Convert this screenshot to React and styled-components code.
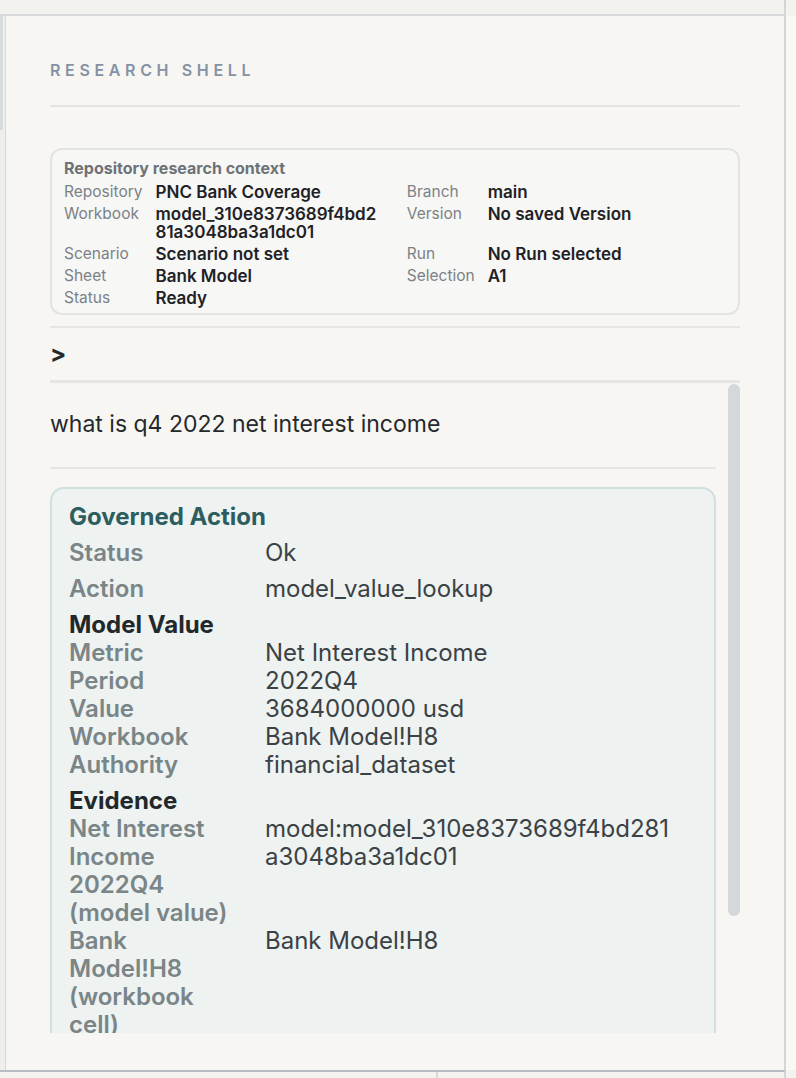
import React from "react";
import styled, { createGlobalStyle } from "styled-components";

const GlobalStyle = createGlobalStyle`
  html, body {
    margin: 0;
    padding: 0;
    background: #f3f2ee;
  }
  body {
    font-family: Inter, "Noto Sans", sans-serif;
    -webkit-font-smoothing: antialiased;
  }
  * { box-sizing: border-box; }
`;

const contextRows = [
  ["Repository", "PNC Bank Coverage"],
  ["Branch", "main"],
  ["Workbook", "model_310e8373689f4bd281a3048ba3a1dc01"],
  ["Version", "No saved Version"],
  ["Scenario", "Scenario not set"],
  ["Run", "No Run selected"],
  ["Sheet", "Bank Model"],
  ["Selection", "A1"],
  ["Status", "Ready"],
];

const sections = [
  {
    title: "Model Value",
    rows: [
      ["Metric", "Net Interest Income"],
      ["Period", "2022Q4"],
      ["Value", "3684000000 usd"],
      ["Workbook", "Bank Model!H8"],
      ["Authority", "financial_dataset"],
    ],
  },
  {
    title: "Evidence",
    rows: [
      ["Net Interest Income 2022Q4 (model value)", "model:model_310e8373689f4bd281a3048ba3a1dc01"],
      ["Bank Model!H8 (workbook cell)", "Bank Model!H8"],
    ],
  },
];

export default function App() {
  return (
    <Page>
      <GlobalStyle />
      <TopStrip />
      <Middle>
        <LeftRail>
          <RailThumb />
        </LeftRail>
        <Shell>
          <Header>Research Shell</Header>

          <ContextBox>
            <ContextTitle>Repository research context</ContextTitle>
            <ContextGrid>
              {contextRows.map(([label, value]) => (
                <React.Fragment key={label}>
                  <ContextLabel>{label}</ContextLabel>
                  <ContextValue>{value}</ContextValue>
                </React.Fragment>
              ))}
            </ContextGrid>
          </ContextBox>

          <Prompt>&gt;</Prompt>

          <Transcript>
            <TranscriptBody>
              <Query>what is q4 2022 net interest income</Query>
              <ActionCard>
                <CardTitle>Governed Action</CardTitle>
                <TopRow>
                  <Label>Status</Label>
                  <Value>Ok</Value>
                </TopRow>
                <TopRow>
                  <Label>Action</Label>
                  <Value>model_value_lookup</Value>
                </TopRow>
                {sections.map((s) => (
                  <Section key={s.title}>
                    <SectionTitle>{s.title}</SectionTitle>
                    {s.rows.map(([label, value]) => (
                      <SectionRow key={label}>
                        <Label>{label}</Label>
                        <Value>{value}</Value>
                      </SectionRow>
                    ))}
                  </Section>
                ))}
              </ActionCard>
            </TranscriptBody>
            <ScrollTrack>
              <ScrollThumb />
            </ScrollTrack>
          </Transcript>
        </Shell>
        <RightRail />
      </Middle>
      <BottomBar>
        <BottomCell />
        <BottomCell />
      </BottomBar>
    </Page>
  );
}

const Page = styled.div`
  width: 796px;
  height: 1078px;
  display: flex;
  flex-direction: column;
  overflow: hidden;
  background: #f3f2ee;
`;

const TopStrip = styled.div`
  height: 16px;
  flex: none;
  width: 786px;
  border-bottom: 2px solid #d6d8dc;
  border-right: 2px solid #d3d5da;
`;

const Middle = styled.div`
  flex: none;
  height: 1054px;
  display: grid;
  grid-template-columns: 6px 778px 12px;
`;

const LeftRail = styled.div`
  border-right: 1px solid #d6d9dc;
  background: #eeeeec;
`;

const RailThumb = styled.div`
  width: 3px;
  height: 114px;
  background: #d9dcdf;
`;

const RightRail = styled.div`
  border-left: 2px solid #d3d5da;
  background: #f9f8f5;
`;

const Shell = styled.section`
  display: flex;
  flex-direction: column;
  padding: 44px 44px 37px 44px;
  background: #f7f6f2;
  min-height: 0;
`;

const Header = styled.h1`
  margin: 0;
  padding-bottom: 25px;
  border-bottom: 2px solid #e4e3df;
  font-size: 16px;
  line-height: 20px;
  font-weight: 600;
  letter-spacing: 0.29em;
  text-transform: uppercase;
  color: #8592a6;
`;

const ContextBox = styled.div`
  margin-top: 41px;
  padding: 8px 12px 6px;
  border: 2px solid #e3e3e0;
  border-radius: 12px;
  background: #f7f7f5;
`;

const ContextTitle = styled.div`
  font-size: 16px;
  line-height: 20px;
  font-weight: 700;
  color: #6d7277;
  margin-bottom: 5px;
`;

const ContextGrid = styled.div`
  display: grid;
  grid-template-columns: auto 1fr auto 1fr;
  column-gap: 13px;
  row-gap: 4px;
  line-height: 18px;
`;

const ContextLabel = styled.span`
  font-size: 15.5px;
  color: #7c8187;
`;

const ContextValue = styled.span`
  font-size: 17px;
  padding-right: 12px;
  color: #1e2226;
  font-weight: 600;
  word-break: break-all;
`;

const Prompt = styled.div`
  margin-top: 11px;
  border-top: 2px solid #e6e5e1;
  padding: 15px 0 15px;
  border-bottom: 3px solid #e6e5e1;
  font-size: 24px;
  line-height: 22px;
  font-weight: 700;
  color: #24292d;
`;

const Transcript = styled.div`
  flex: 1;
  min-height: 0;
  display: grid;
  grid-template-columns: 1fr 12px;
  column-gap: 12px;
  overflow: hidden;
`;

const TranscriptBody = styled.div`
  min-height: 0;
  overflow: hidden;
`;

const ScrollTrack = styled.div`
  padding-top: 1px;
`;

const ScrollThumb = styled.div`
  height: 532px;
  border-radius: 6px;
  background: #d5d8db;
`;

const Query = styled.div`
  padding: 27px 0 29px;
  border-bottom: 2px solid #e6e5e1;
  font-size: 23px;
  line-height: 28px;
  color: #24292d;
`;

const ActionCard = styled.div`
  margin-top: 18px;
  padding: 14px 40px 16px 17px;
  border: 2px solid #cfe0df;
  border-radius: 14px;
  background: #eef2f1;
  display: flex;
  flex-direction: column;
  gap: 8px;
  font-size: 24px;
  line-height: 28px;
`;

const CardTitle = styled.div`
  font-weight: 700;
  color: #2d5d5f;
`;

const TopRow = styled.div`
  display: grid;
  grid-template-columns: 170px 1fr;
  column-gap: 26px;
`;

const Section = styled.div`
  display: flex;
  flex-direction: column;
`;

const SectionTitle = styled.div`
  font-weight: 700;
  color: #22282a;
`;

const SectionRow = styled(TopRow)``;

const Label = styled.span`
  font-weight: 600;
  color: #7a8587;
`;

const Value = styled.span`
  color: #3b4245;
  word-break: break-all;
`;

const BottomBar = styled.div`
  flex: 1;
  width: 786px;
  display: grid;
  grid-template-columns: 436px 1fr;
  border-top: 2px solid #b9bdc3;
  border-right: 2px solid #d3d5da;
`;

const BottomCell = styled.div`
  background: #f4f3ef;
  & + & {
    border-left: 2px solid #d6d8dc;
  }
`;
